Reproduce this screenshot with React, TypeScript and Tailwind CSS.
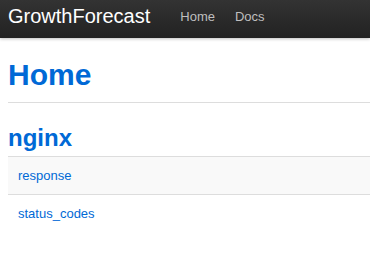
import React from "react";

const graphs = ["response", "status_codes"];

const App: React.FC = () => {
  return (
    <div className="min-h-screen bg-white font-['Liberation_Sans',Arial,sans-serif]">
      <div className="h-[38px] bg-gradient-to-b from-[#333333] to-[#222222] shadow-[0_1px_3px_rgba(0,0,0,0.25)] flex items-start">
        <a className="ml-[8px] pt-[6px] text-[20px] leading-[20px] text-white">
          GrowthForecast
        </a>
        <ul className="flex ml-[20px] pt-[8px] text-[13px] leading-[18px]">
          <li>
            <a className="block px-[10px] text-[#bfbfbf]">Home</a>
          </li>
          <li>
            <a className="block px-[10px] text-[#bfbfbf]">Docs</a>
          </li>
        </ul>
      </div>

      <div className="pl-[8px] pt-[19px]">
        <div className="border-b border-[#dddddd] mb-[17px]">
          <h1 className="text-[30px] leading-[36px] font-bold text-[#0069d6] mb-[9px]">
            Home
          </h1>
        </div>

        <h2 className="text-[24px] leading-[36px] font-bold text-[#0069d6]">nginx</h2>
        <table className="w-full border-collapse">
          <tbody>
            {graphs.map((g, i) => (
              <tr key={g} className={i % 2 === 0 ? "bg-[#f9f9f9]" : ""}>
                <td className="border-t border-[#dddddd] pt-[10px] pb-[9px] px-[10px] text-[13px] leading-[18px]">
                  <a className="text-[#0069d6]">{g}</a>
                </td>
              </tr>
            ))}
          </tbody>
        </table>
      </div>
    </div>
  );
};

export default App;
